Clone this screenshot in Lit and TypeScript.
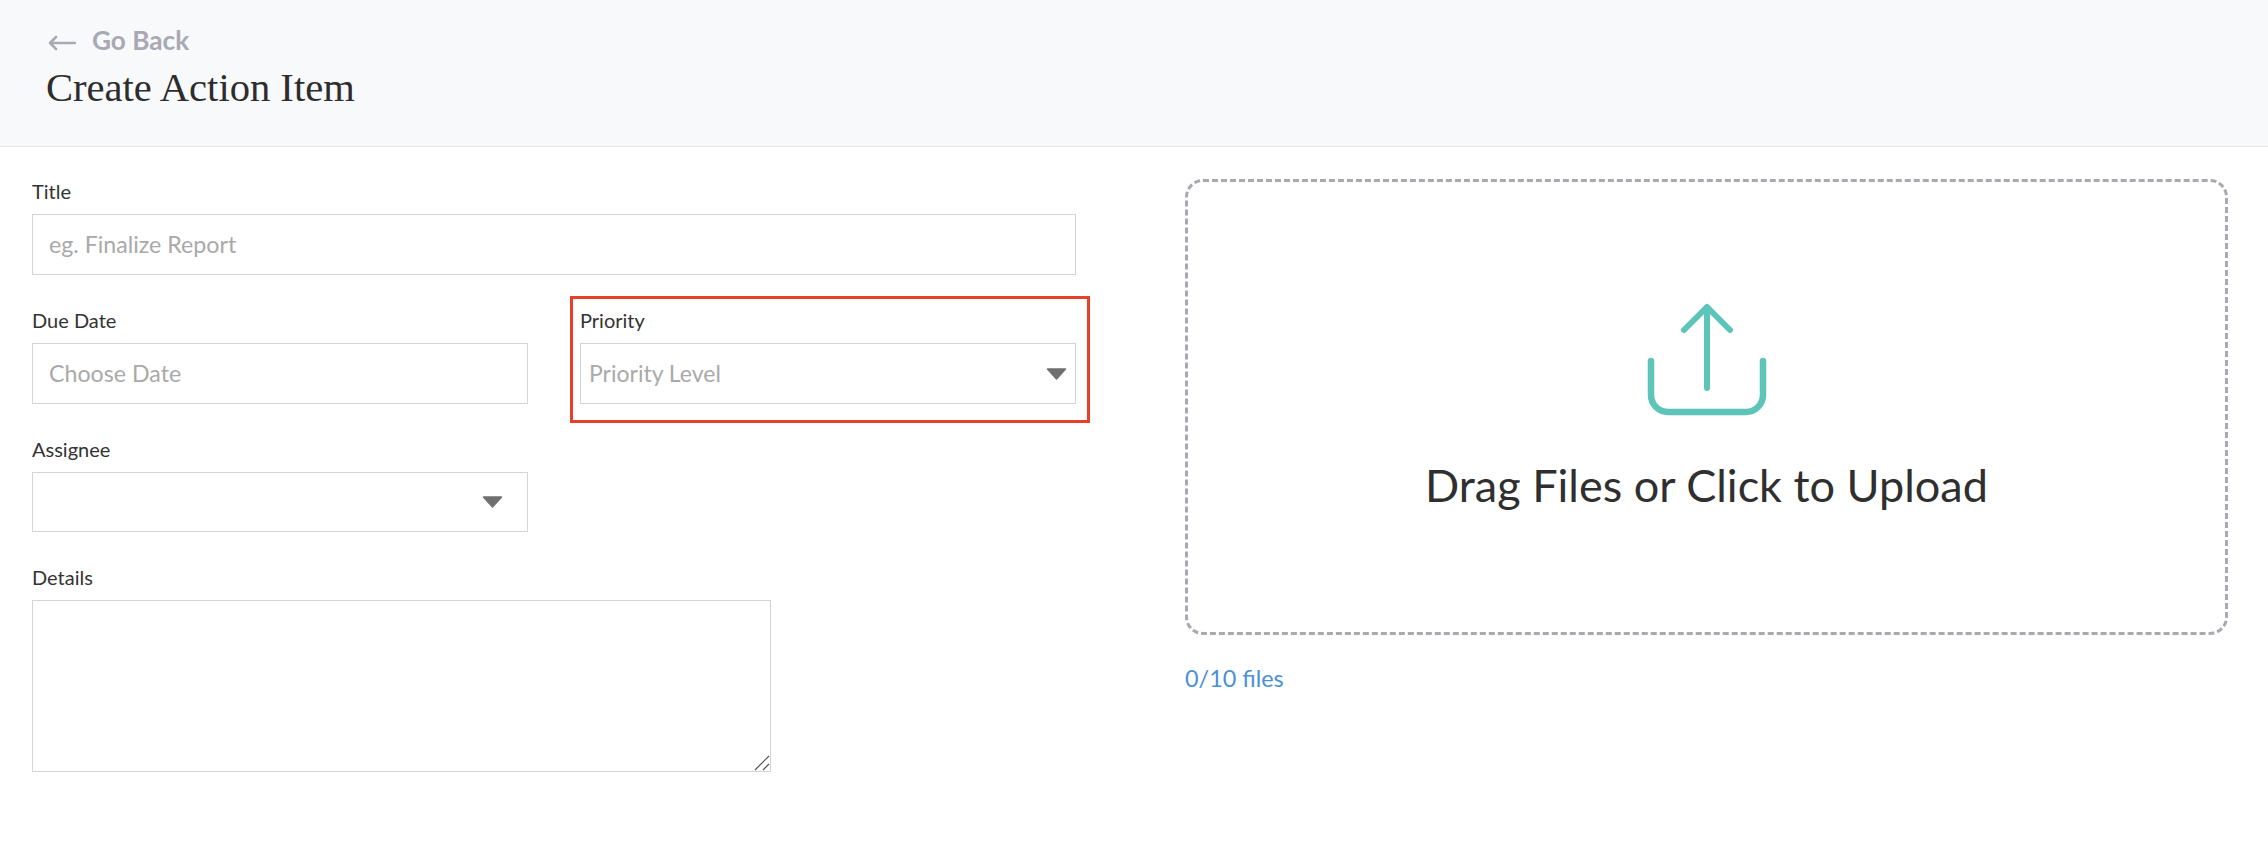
import { LitElement, html, css, svg } from "lit";
import { customElement } from "lit/decorators.js";

const caret = svg`<svg class="caret" width="21" height="12" viewBox="0 0 21 12"><path d="M1.5 1h18L10.5 11z" fill="#6f6f6f" stroke="#6f6f6f" stroke-width="1.5" stroke-linejoin="round"/></svg>`;

@customElement("app-root")
export class AppRoot extends LitElement {
  static styles = css`
    :host {
      display: block;
      min-height: 848px;
      background: #fff;
      color: #333;
      font-family: Lato, "Noto Sans", sans-serif;
    }
    .header {
      box-sizing: border-box;
      height: 147px;
      padding: 24px 46px 0;
      background: #f8f9fb;
      border-bottom: 1px solid #e6e8ec;
    }
    .back {
      display: flex;
      align-items: center;
      gap: 16px;
      height: 32px;
      color: #a9a9b4;
      font-size: 26.2px;
      font-weight: 700;
    }
    .back svg {
      margin: 5px 0 0 2px;
    }
    h1 {
      margin: 9px 0 0;
      font-family: "Liberation Serif", serif;
      font-size: 40.6px;
      line-height: 46px;
      font-weight: 400;
      color: #2d2d2d;
    }
    .main {
      display: grid;
      grid-template-columns: 1044px 1043px;
      column-gap: 109px;
      padding: 32px 0 0 32px;
    }
    .form {
      display: grid;
      grid-template-columns: 496px 496px;
      column-gap: 52px;
      row-gap: 33px;
      align-content: start;
    }
    .field {
      position: relative;
      display: flex;
      flex-direction: column;
      gap: 11px;
    }
    .wide {
      grid-column: 1 / -1;
    }
    .field.marked::after {
      content: "";
      position: absolute;
      inset: -12px -14px -19px -10px;
      border: 3px solid #e8412a;
      pointer-events: none;
    }
    label {
      font-size: 20px;
      line-height: 24px;
      color: #333;
    }
    input,
    textarea,
    .select {
      box-sizing: border-box;
      margin: 0;
      border: 1px solid #d4d4d4;
      border-radius: 0;
      background: #fff;
      outline: none;
      font-family: inherit;
      font-size: 23.2px;
      color: #333;
    }
    input {
      width: 100%;
      height: 61px;
      padding: 0 16px 2px;
    }
    input::placeholder {
      color: #a9a9a9;
      opacity: 1;
    }
    .select {
      display: flex;
      align-items: center;
      justify-content: space-between;
      height: 61px;
      padding: 0 8px;
      color: #a9a9a9;
    }
    .select span {
      margin-bottom: 2px;
      font-size: 23px;
    }
    .select.assignee {
      width: 496px;
      height: 60px;
      padding-right: 24px;
    }
    .select.assignee .caret {
      margin-left: auto;
    }
    .area {
      position: relative;
      width: 739px;
    }
    textarea {
      display: block;
      width: 100%;
      height: 172px;
      resize: none;
    }
    .grip {
      position: absolute;
      right: 0;
      bottom: 0;
      pointer-events: none;
    }
    .side {
      display: flex;
      flex-direction: column;
    }
    .drop {
      box-sizing: border-box;
      height: 456px;
      display: flex;
      flex-direction: column;
      align-items: center;
      border: 3px dashed #a9a9b2;
      border-radius: 18px;
      padding-top: 120px;
    }
    .drop span {
      margin-top: 41px;
      font-size: 45px;
      line-height: 52px;
      color: #2f2f2f;
    }
    .count {
      margin-top: 28px;
      font-size: 23.4px;
      line-height: 30px;
      color: #4a90d9;
    }
  `;

  render() {
    return html`
      <div class="header">
        <div class="back">
          <svg width="28" height="18" viewBox="0 0 28 18" fill="none" stroke="#a9a9b4" stroke-width="2.5" stroke-linecap="round" stroke-linejoin="round">
            <path d="M2 9h25M8 3 2 9l6 6" />
          </svg>
          Go Back
        </div>
        <h1>Create Action Item</h1>
      </div>
      <div class="main">
        <div class="form">
          <div class="field wide">
            <label>Title</label>
            <input placeholder="eg. Finalize Report" />
          </div>
          <div class="field">
            <label>Due Date</label>
            <input placeholder="Choose Date" />
          </div>
          <div class="field marked">
            <label>Priority</label>
            <div class="select"><span>Priority Level</span>${caret}</div>
          </div>
          <div class="field wide">
            <label>Assignee</label>
            <div class="select assignee">${caret}</div>
          </div>
          <div class="field wide">
            <label>Details</label>
            <div class="area">
              <textarea></textarea>
              <svg class="grip" width="18" height="18" viewBox="0 0 18 18" fill="none" stroke="#555" stroke-width="1.2">
                <path d="M2 16 16 2M10 16l6-6" />
              </svg>
            </div>
          </div>
        </div>
        <div class="side">
          <div class="drop">
            <svg width="122" height="116" viewBox="0 0 122 116" fill="none" stroke="#5cc4b9" stroke-width="6" stroke-linecap="round" stroke-linejoin="round">
              <path d="M5 59v34a17 17 0 0 0 17 17h78a17 17 0 0 0 17-17V59" stroke-width="6.5" />
              <path d="M61 86V5M38 28 61 5l23 23" />
            </svg>
            <span>Drag Files or Click to Upload</span>
          </div>
          <div class="count">0/10 files</div>
        </div>
      </div>
    `;
  }
}
